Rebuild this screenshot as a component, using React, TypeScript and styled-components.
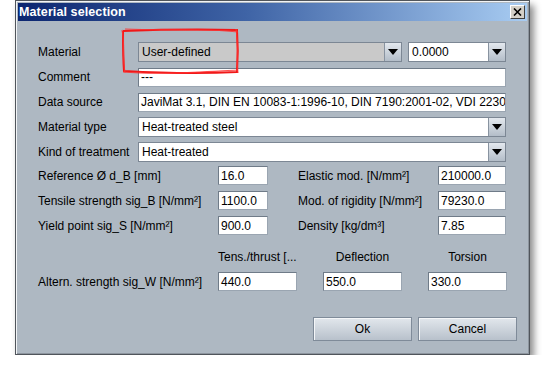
import React from "react";
import styled, { createGlobalStyle } from "styled-components";

const GlobalStyle = createGlobalStyle`
  html, body {
    margin: 0;
    padding: 0;
    background: #ffffff;
  }
  body {
    font-family: "Liberation Sans", Arial, sans-serif;
    font-size: 12px;
    color: #000;
  }
`;

const Page = styled.div`
  padding: 0 0 0 15px;
`;

const Window = styled.div`
  position: relative;
  width: 515px;
  height: 355px;
  box-sizing: border-box;
  background: #aeb8c2;
  border: 1px solid #50555b;
  padding: 2px;
  box-shadow: inset 1px 1px 0 #f2f4f6, inset -1px -1px 0 #8d959e, 4px 5px 7px rgba(0, 0, 0, 0.45);
  display: flex;
  flex-direction: column;
`;

const TitleBar = styled.div`
  height: 18px;
  display: flex;
  align-items: center;
  justify-content: space-between;
  padding-left: 1px;
  background: linear-gradient(to right, #0c2670 0%, #3f64a6 45%, #a8ccf2 100%);
`;

const Title = styled.span`
  color: #fff;
  font-weight: bold;
  font-size: 12.5px;
  letter-spacing: 0.1px;
`;

const CloseButton = styled.div`
  width: 15px;
  height: 14px;
  margin-right: 2px;
  box-sizing: border-box;
  background: #d4d0c8;
  border: 1px solid;
  border-color: #ffffff #404040 #404040 #ffffff;
  display: flex;
  align-items: center;
  justify-content: center;
`;

const Content = styled.div`
  flex: 1;
  display: flex;
  flex-direction: column;
  padding: 21px 21px 0 20px;
`;

const TopGrid = styled.div`
  display: grid;
  grid-template-columns: 100px 1fr;
  grid-auto-rows: 20px;
  row-gap: 5px;
  align-items: center;
`;

const Label = styled.div<{ $pad?: number }>`
  white-space: nowrap;
  padding-left: ${(p) => p.$pad ?? 0}px;
  line-height: 14px;
`;

const FieldRow = styled.div`
  display: flex;
  gap: 6px;
  height: 100%;
`;

const Field = styled.div<{ $w?: number; $h?: number }>`
  ${(p) => (p.$w ? `width: ${p.$w}px;` : "flex: 1;")}
  height: ${(p) => p.$h ?? 20}px;
  box-sizing: border-box;
  background: #fff;
  border: 1px solid;
  border-color: #6f7b88 #9aa5b1 #9aa5b1 #6f7b88;
  padding: 0 2px;
  display: flex;
  align-items: center;
  white-space: nowrap;
  overflow: hidden;
`;

const Combo = styled.div<{ $w?: number; $disabled?: boolean }>`
  ${(p) => (p.$w ? `width: ${p.$w}px;` : "flex: 1;")}
  height: 20px;
  box-sizing: border-box;
  border: 1px solid #7c8794;
  display: flex;
  background: ${(p) => (p.$disabled ? "#c9c9c9" : "#ffffff")};
`;

const ComboText = styled.div`
  flex: 1;
  padding-left: 3px;
  display: flex;
  align-items: center;
  white-space: nowrap;
  overflow: hidden;
`;

const ArrowButton = styled.div`
  width: 16px;
  border-left: 1px solid #8893a0;
  background: linear-gradient(#e3e8ee, #b3bdc8);
  display: flex;
  align-items: center;
  justify-content: center;
`;

const Arrow = styled.div`
  width: 0;
  height: 0;
  border-left: 5px solid transparent;
  border-right: 5px solid transparent;
  border-top: 6px solid #000;
`;

const NumGrid = styled.div`
  margin-top: 4px;
  display: grid;
  grid-template-columns: 180px 50px 170px 68px;
  grid-auto-rows: 19px;
  row-gap: 6px;
  align-items: center;
`;

const AltGrid = styled.div`
  margin-top: 15px;
  display: grid;
  grid-template-columns: 154px 79px 79px 79px;
  grid-template-rows: 14px 19px;
  column-gap: 26px;
  row-gap: 8px;
  align-items: center;
`;

const ColHead = styled.div<{ $left?: boolean }>`
  line-height: 14px;
  text-align: ${(p) => (p.$left ? "left" : "center")};
  white-space: nowrap;
`;

const ButtonBar = styled.div`
  margin-top: 26px;
  margin-right: -11px;
  display: flex;
  justify-content: flex-end;
  gap: 6px;
`;

const Button = styled.div`
  width: 99px;
  height: 24px;
  box-sizing: border-box;
  border: 1px solid #7f8b99;
  box-shadow: inset 1px 1px 0 #f4f6f8;
  background: linear-gradient(#e2e7ec, #b8c1cb);
  display: flex;
  align-items: center;
  justify-content: center;
`;

const Markup = styled.svg`
  position: absolute;
  left: 104px;
  top: 25px;
  pointer-events: none;
`;

const DropDown = ({ text, w, disabled }: { text: string; w?: number; disabled?: boolean }) => (
  <Combo $w={w} $disabled={disabled}>
    <ComboText>{text}</ComboText>
    <ArrowButton>
      <Arrow />
    </ArrowButton>
  </Combo>
);

const numbers = [
  ["Reference Ø d_B [mm]", "16.0", "Elastic mod. [N/mm²]", "210000.0"],
  ["Tensile strength sig_B [N/mm²]", "1100.0", "Mod. of rigidity [N/mm²]", "79230.0"],
  ["Yield point sig_S [N/mm²]", "900.0", "Density [kg/dm³]", "7.85"],
];

export default function App() {
  return (
    <Page>
      <GlobalStyle />
      <Window>
        <TitleBar>
          <Title>Material selection</Title>
          <CloseButton>
            <svg width="9" height="8" viewBox="0 0 9 8">
              <path d="M1 0.5 L8 7.5 M8 0.5 L1 7.5" stroke="#000" strokeWidth="1.6" />
            </svg>
          </CloseButton>
        </TitleBar>
        <Content>
          <TopGrid>
            <Label>Material</Label>
            <FieldRow>
              <DropDown text="User-defined" disabled />
              <DropDown text="0.0000" w={98} />
            </FieldRow>
            <Label>Comment</Label>
            <Field $h={19}>---</Field>
            <Label>Data source</Label>
            <Field $h={19}>JaviMat 3.1, DIN EN 10083-1:1996-10, DIN 7190:2001-02, VDI 2230</Field>
            <Label>Material type</Label>
            <DropDown text="Heat-treated steel" />
            <Label>Kind of treatment</Label>
            <DropDown text="Heat-treated" />
          </TopGrid>

          <NumGrid>
            {numbers.map((r) => (
              <React.Fragment key={r[0]}>
                <Label>{r[0]}</Label>
                <Field $w={50} $h={19}>{r[1]}</Field>
                <Label $pad={30}>{r[2]}</Label>
                <Field $w={68} $h={19}>{r[3]}</Field>
              </React.Fragment>
            ))}
          </NumGrid>

          <AltGrid>
            <div />
            <ColHead $left>Tens./thrust [...</ColHead>
            <ColHead>Deflection</ColHead>
            <ColHead>Torsion</ColHead>
            <Label>Altern. strength sig_W [N/mm²]</Label>
            <Field $w={79} $h={19}>440.0</Field>
            <Field $w={79} $h={19}>550.0</Field>
            <Field $w={79} $h={19}>330.0</Field>
          </AltGrid>

          <ButtonBar>
            <Button>Ok</Button>
            <Button>Cancel</Button>
          </ButtonBar>
        </Content>

        <Markup width="140" height="56" viewBox="0 0 140 56">
          <path
            d="M3 5 C30 4 70 3 117 4 C118 18 118 32 117 46 C80 48 40 47 4 45 C3 32 3 18 3 5"
            fill="none"
            stroke="#f01818"
            strokeWidth="2"
          />
          <path
            d="M5 3 C40 5 80 2 118 6 M116 3 C119 20 116 35 118 47 M118 44 C80 46 40 49 3 46 M5 47 C2 30 5 15 2 4"
            fill="none"
            stroke="#ff3030"
            strokeWidth="1.2"
            opacity="0.85"
          />
        </Markup>
      </Window>
    </Page>
  );
}
